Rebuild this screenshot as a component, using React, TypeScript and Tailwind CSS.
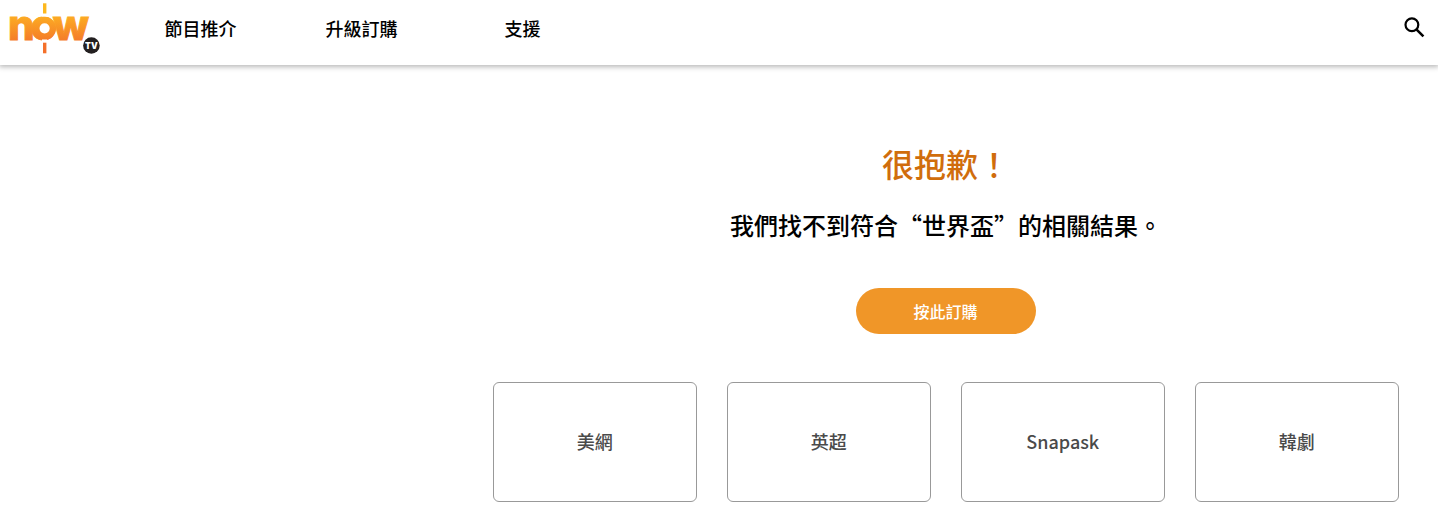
const NAV_ITEMS = ["節目推介", "升級訂購", "支援"];
const SUGGESTIONS = ["美網", "英超", "Snapask", "韓劇"];

function Logo() {
  return (
    <svg width="94" height="54" viewBox="0 0 94 54" className="block" aria-label="now TV">
      <defs>
        <linearGradient id="now" gradientUnits="userSpaceOnUse" x1="0" y1="14" x2="0" y2="41">
          <stop offset="0" stopColor="#fdb022" />
          <stop offset="1" stopColor="#f47b29" />
        </linearGradient>
      </defs>
      <text
        x="2 24.5 46.8"
        y="39.6"
        fill="url(#now)"
        stroke="url(#now)"
        strokeWidth="0.9"
        fontFamily="Inter, sans-serif"
        fontWeight="800"
        fontSize="42"
      >
        now
      </text>
      <circle cx="38.6" cy="28.3" r="8.3" fill="#fff" stroke="url(#now)" strokeWidth="6.4" />
      <rect x="36" y="12" width="5.2" height="4.5" fill="#fff" />
      <rect x="36" y="39.5" width="5.2" height="3.3" fill="#fff" />
      <rect x="37" y="3.3" width="3.4" height="10.2" fill="#fdb81e" />
      <rect x="37" y="42.7" width="3.4" height="10.6" fill="#f4702a" />
      <circle cx="85.4" cy="45.5" r="8.3" fill="#231f20" />
      <text x="79.1" y="49" textLength="12.6" lengthAdjust="spacingAndGlyphs" fill="#fff" fontFamily="Inter, sans-serif" fontWeight="900" fontSize="9.5">
        TV
      </text>
    </svg>
  );
}

function Header() {
  return (
    <header className="flex h-[65px] justify-between bg-white pl-1.5 shadow-[0_1px_5px_1px_rgba(0,0,0,0.28)]">
      <div className="flex">
        <Logo />
        <nav className="ml-5 flex h-14 items-center">
          {NAV_ITEMS.map((item) => (
            <a key={item} href="#" className="w-[161px] text-center text-[18px] leading-6 font-medium text-black">
              {item}
            </a>
          ))}
        </nav>
      </div>
      <button aria-label="搜尋" className="mr-[9px] h-[54px]">
        <svg width="30" height="28" viewBox="0 0 30 28" fill="none" stroke="#000" strokeWidth="2.2">
          <circle cx="12.9" cy="11.7" r="6.4" />
          <path d="M17.4 16.4 24.4 23.4" strokeWidth="2.6" />
        </svg>
      </button>
    </header>
  );
}

export default function App() {
  return (
    <div
      lang="zh-Hant-TW"
      className="h-[522px] overflow-hidden bg-white font-['Noto_Sans_CJK_TC',sans-serif]"
    >
      <Header />
      <main className="ml-[493px] flex w-[906px] flex-col items-center pt-[74px]">
        <h1 className="text-[32px] leading-[48px] font-medium text-[#d06d0c]">很抱歉！</h1>
        <p className="mt-5 text-2xl leading-9 font-medium text-black">
          我們找不到符合“世界盃”的相關結果。
        </p>
        <button className="mt-[45px] h-[46px] w-[180px] rounded-full bg-[#f09628] pr-px text-base font-medium text-white">
          按此訂購
        </button>
        <div className="mt-12 grid w-full grid-cols-4 gap-[30px]">
          {SUGGESTIONS.map((label) => (
            <a
              key={label}
              href="#"
              className="flex h-[120px] items-center justify-center rounded-md border border-[#999] pr-[0.5px] pb-0.5 text-[18px] font-medium text-[#4a4a4a]"
            >
              {label}
            </a>
          ))}
        </div>
      </main>
    </div>
  );
}
